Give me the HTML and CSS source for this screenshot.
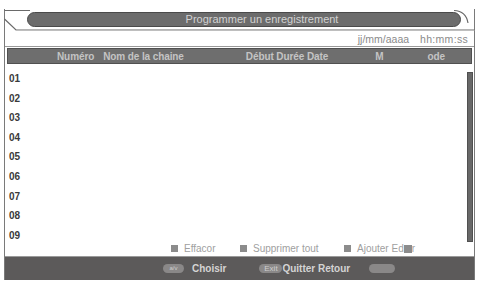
FILE: index.html
```html
<!DOCTYPE html>
<html>
<head>
<meta charset="utf-8">
<link rel="stylesheet" href="styles.css">
</head>
<body>
<div class="screen">
  <div class="titlebar">
    <svg class="frame" width="471" height="22" viewBox="0 0 471 22">
      <path d="M0.5 1.5 H26 M450 1.5 Q462 2 464 14 M0.5 10 L12 21 H470.5" fill="none" stroke="#6a6a6a" stroke-width="1.2"/>
      <path d="M12 22 H470.5" fill="none" stroke="#c8c8c8" stroke-width="1"/>
    </svg>
    <div class="pill">Programmer un enregistrement</div>
  </div>
  <div class="daterow">
    <span><u>jj</u>/mm/aaaa</span>
    <span>hh:mm:ss</span>
  </div>
  <div class="header">
    <span class="h-num">Numéro</span>
    <span class="h-name">Nom de la chaine</span>
    <span class="h-date">Début Durée Date</span>
    <span class="h-mode">M</span>
    <span class="h-ode">ode</span>
  </div>
  <div class="content">
    <div class="main">
      <div class="list">
        <div class="row">01</div>
        <div class="row">02</div>
        <div class="row">03</div>
        <div class="row">04</div>
        <div class="row">05</div>
        <div class="row">06</div>
        <div class="row">07</div>
        <div class="row">08</div>
        <div class="row">09</div>
      </div>
      <div class="legend">
        <span class="item"><i class="sq"></i>Effacor</span>
        <span class="item"><i class="sq"></i>Supprimer tout</span>
        <span class="item"><i class="sq"></i>Ajouter Ed<i class="sq sq-in"></i><span class="tail">r</span></span>
      </div>
    </div>
    <div class="scrollcol"><div class="scroll"></div></div>
  </div>
  <div class="footer">
    <span class="key key-av">a/v</span>
    <span class="lbl lbl-choisir">Choisir</span>
    <span class="key key-exit">Exit</span>
    <span class="lbl">Quitter Retour</span>
    <span class="key key-blank"></span>
  </div>
</div>
</body>
</html>
```

FILE: styles.css
```css
* { box-sizing: border-box; }
html, body {
  margin: 0;
  padding: 0;
  background: #ffffff;
}
body {
  width: 478px;
  height: 281px;
  overflow: hidden;
  font-family: "Liberation Sans", Arial, sans-serif;
}
.screen {
  margin: 9px 0 0 4px;
  width: 471px;
  height: 271px;
  border-left: 1px solid #7a7a7a;
  border-right: 1px solid #7a7a7a;
  display: flex;
  flex-direction: column;
  background: #fff;
}
.titlebar {
  position: relative;
  height: 22px;
  flex: none;
  display: flex;
  align-items: flex-start;
  padding: 3px 0 0 22px;
}
.frame {
  position: absolute;
  left: -1px;
  top: 0;
}
.pill {
  position: relative;
  width: 434px;
  height: 15px;
  border-radius: 8px;
  background: #6c6c6c;
  border: 1px solid #4a4a4a;
  color: #d2d2d2;
  font-size: 11px;
  line-height: 13px;
  text-align: center;
  padding-left: 36px;
}
.daterow {
  height: 16px;
  flex: none;
  display: flex;
  justify-content: flex-end;
  gap: 11px;
  padding-right: 6px;
  font-size: 10.5px;
  line-height: 16px;
  color: #8a8a8a;
  border-bottom: 1px solid #9a9a9a;
}
.daterow span:last-child { letter-spacing: 0.3px; }
.header {
  height: 16px;
  flex: none;
  margin: 1px 2px 0 2px;
  background: #6e6e6e;
  border: 1px solid #505050;
  display: flex;
  align-items: center;
  font-size: 10px;
  font-weight: bold;
  letter-spacing: -0.1px;
  color: #c4c4c4;
  white-space: nowrap;
}
.h-num { margin-left: 49px; }
.h-name { margin-left: 9px; }
.h-date { margin-left: 62px; }
.h-mode { margin-left: 47px; }
.h-ode { margin-left: 44px; }
.content {
  flex: 1;
  display: flex;
  min-height: 0;
  border-bottom: 1px solid #9a9a9a;
}
.main {
  flex: 1;
  display: flex;
  flex-direction: column;
}
.list {
  padding: 5px 0 0 4px;
}
.row {
  height: 19.6px;
  line-height: 19.6px;
  font-size: 10px;
  font-weight: bold;
  color: #3a3a3a;
}
.legend {
  display: flex;
  padding-left: 166px;
  height: 11px;
  margin-top: -2px;
  font-size: 10px;
  line-height: 11px;
  color: #a0a0a0;
}
.item {
  display: flex;
  align-items: center;
  white-space: nowrap;
}
.item:nth-child(1) { width: 69px; }
.item:nth-child(2) { width: 104px; }
.sq {
  display: inline-block;
  width: 7px;
  height: 7px;
  background: #8c8c8c;
  margin-right: 6px;
}
.sq-in {
  width: 8px;
  height: 8px;
  margin: 0;
}
.tail { display: inline-block; }
.scrollcol {
  width: 7px;
  flex: none;
  padding-top: 8px;
}
.scroll {
  width: 6px;
  height: 170px;
  background: #686868;
  border: 1px solid #505050;
}
.footer {
  height: 23px;
  flex: none;
  background: #5c5a5a;
  display: flex;
  align-items: center;
  padding-left: 158px;
  white-space: nowrap;
}
.key {
  display: inline-block;
  height: 9px;
  border-radius: 5px;
  background: #8a8888;
  font-size: 6px;
  line-height: 9px;
  color: #cfcfcf;
  text-align: center;
}
.key-av { width: 21px; }
.key-exit { width: 23px; margin-left: 33px; font-size: 8px; }
.key-blank { width: 26px; margin-left: 19px; }
.lbl {
  font-size: 10px;
  font-weight: bold;
  color: #d4d4d4;
}
.lbl-choisir { margin-left: 8px; }
```
